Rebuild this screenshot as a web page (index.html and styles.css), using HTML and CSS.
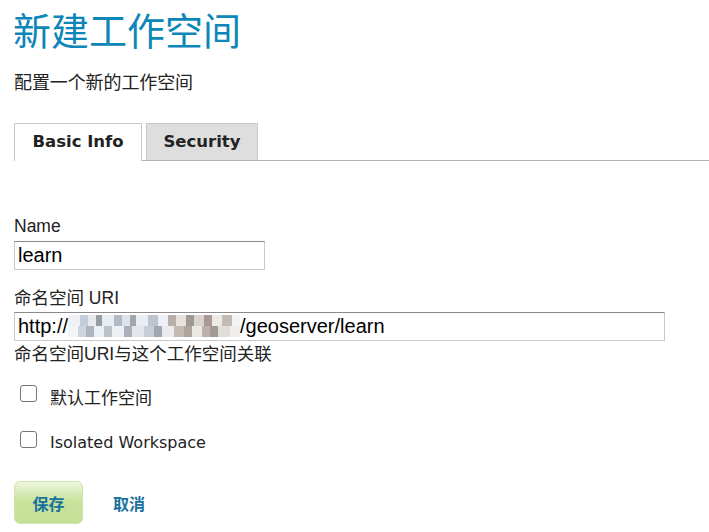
FILE: index.html
```html
<!DOCTYPE html>
<html lang="zh">
<head>
<meta charset="utf-8">
<title>新建工作空间</title>
<link rel="stylesheet" href="styles.css">
</head>
<body>
<div class="page">
  <h1 class="title">新建工作空间</h1>
  <p class="subtitle">配置一个新的工作空间</p>

  <div class="tabs">
    <div class="tab active">Basic Info</div>
    <div class="tab">Security</div>
  </div>

  <form class="form">
    <label class="label">Name</label>
    <div class="field short">learn</div>

    <label class="label label-uri">命名空间 URI</label>
    <div class="field long">http://<span class="mosaic"></span>/geoserver/learn</div>
    <div class="hint">命名空间URI与这个工作空间关联</div>

    <div class="check-row first"><span class="box"></span><span class="check-label">默认工作空间</span></div>
    <div class="check-row"><span class="box"></span><span class="check-label">Isolated Workspace</span></div>

    <div class="actions">
      <button type="button" class="save">保存</button>
      <a class="cancel">取消</a>
    </div>
  </form>
</div>
</body>
</html>
```
FILE: styles.css
```css
* { box-sizing: border-box; }
html, body { margin: 0; padding: 0; background: #fff; }
body {
  font-family: "Liberation Sans", "Noto Sans CJK SC", sans-serif;
  color: #222;
}
.page { padding: 0 0 0 14px; }
.title {
  margin: 0;
  padding-top: 4px;
  font-family: "Noto Sans CJK SC", sans-serif;
  font-weight: 400;
  font-size: 38px;
  line-height: 50px;
  color: #0d86b8;
  margin-left: -1px;
}
.subtitle {
  margin: 15px 0 0 0;
  font-family: "Noto Sans CJK SC", sans-serif;
  font-size: 18px;
  line-height: 24px;
  color: #222;
  letter-spacing: -0.1px;
}
.tabs {
  display: flex;
  gap: 4px;
  margin-top: 30px;
  border-bottom: 1px solid #b4b4b4;
  height: 38px;
}
.tab {
  font-family: "DejaVu Sans", Verdana, sans-serif;
  font-weight: 700;
  font-size: 16.5px;
  height: 37px;
  line-height: 35px;
  border: 1px solid #c8c8c8;
  border-bottom: none;
  background: #dedede;
  color: #222;
  padding: 0 18px;
}
.tab.active {
  background: #fff;
  height: 38px;
  width: 128px;
  text-align: center;
  padding: 0;
}
.tab:not(.active) { width: 112px; text-align: center; padding: 0; }
.form { display: flex; flex-direction: column; align-items: flex-start; padding-top: 54px; }
.label {
  font-size: 17.5px;
  line-height: 22px;
  color: #222;
}
.field {
  margin-top: 4px;
  height: 29px;
  border: 1px solid #c9c9c9;
  border-top-color: #8a8a8a;
  font-size: 20px;
  line-height: 27px;
  padding-left: 3px;
  color: #000;
  white-space: nowrap;
}
.short { width: 251px; }
.long { width: 651px; margin-top: 3px; }
.label-uri { margin-top: 17px; }
.mosaic {
  display: inline-block;
  width: 172px;
  height: 22px;
  vertical-align: -4px;
  background:
    linear-gradient(90deg, #eef1f6 0 12px, #c3cddd 12px 20px, #e6e9ee 20px 28px, #959da7 28px 34px, #e9ecf1 34px 46px, #b1b9c4 46px 54px, #dfe3e9 54px 62px, #a2a7af 62px 68px, #eaedf2 68px 80px, #bec4cd 80px 90px, #edf0f4 90px 100px, #b7afa8 100px 108px, #e6e3df 108px 118px, #9f9993 118px 126px, #d9d4cf 126px 136px, #aa9892 136px 144px, #ece9e6 144px 154px, #c1bab5 154px 164px, #f3f3f3 164px 172px) 0 0 / 172px 11px no-repeat,
    linear-gradient(90deg, #f3f5f8 0 10px, #cfd5e0 10px 18px, #adb4be 18px 26px, #eceff3 26px 36px, #bcc2ca 36px 44px, #eef0f3 44px 56px, #aab1bb 56px 64px, #e3e7ec 64px 76px, #c9ced5 76px 86px, #a1a7b0 86px 94px, #e9ebee 94px 106px, #c3bab3 106px 116px, #ada49e 116px 124px, #ebe7e3 124px 134px, #bbb0aa 134px 142px, #a39a95 142px 150px, #e2ddd9 150px 162px, #f1efee 162px 172px) 0 11px / 172px 11px no-repeat;
}
.hint {
  margin-top: 2px;
  font-size: 17.5px;
  line-height: 22px;
  color: #222;
}
.check-row {
  display: flex;
  align-items: center;
  margin-top: 24px;
  padding-left: 6px;
  height: 22px;
}
.check-row.first { margin-top: 20px; }
.box {
  width: 17px;
  height: 17px;
  border: 1.5px solid #767676;
  border-radius: 3px;
  background: #fff;
  margin-top: -6px;
}
.check-label {
  margin-left: 13px;
  font-family: "DejaVu Sans", "Noto Sans CJK SC", sans-serif;
  font-size: 16px;
  color: #222;
}
.check-row.first .check-label { font-family: "Noto Sans CJK SC", sans-serif; font-size: 17px; }
.actions {
  display: flex;
  align-items: center;
  margin-top: 28px;
  gap: 30px;
}
.save {
  width: 69px;
  height: 43px;
  border: 1px solid #cfe3b0;
  border-radius: 6px;
  background: linear-gradient(#eef6df, #c9e39d 45%, #c5df98);
  font-family: "Noto Sans CJK SC", sans-serif;
  font-weight: 700;
  font-size: 16px;
  color: #18729c;
  padding: 0;
}
.cancel {
  font-family: "Noto Sans CJK SC", sans-serif;
  font-weight: 700;
  font-size: 16px;
  color: #18729c;
}
```
